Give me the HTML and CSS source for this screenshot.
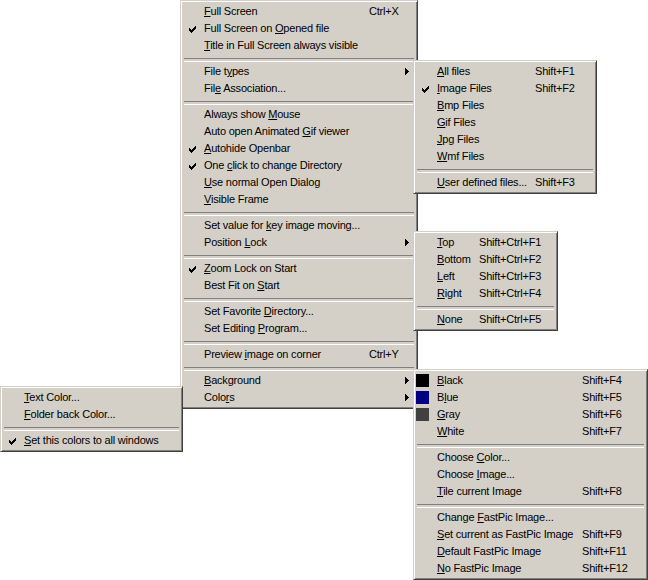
FILE: index.html
```html
<!DOCTYPE html>
<html>
<head>
<meta charset="utf-8">
<link rel="stylesheet" href="styles.css">
</head>
<body>
<div class="desk">

  <div class="menu m-main">
    <div class="item"><span class="mark"></span><span class="label"><u>F</u>ull Screen</span><span class="key">Ctrl+X</span></div>
    <div class="item"><span class="mark"><svg class="check" width="7" height="7" viewBox="0 0 7 7" shape-rendering="crispEdges"><path d="M6 0h1v1H6zM5 1h2v1H5zM0 2h1v1H0zM4 2h3v1H4zM0 3h2v1H0zM3 3h3v1H3zM0 4h5v1H0zM1 5h3v1H1zM2 6h1v1H2z"/></svg></span><span class="label">Full Screen on <u>O</u>pened file</span></div>
    <div class="item"><span class="mark"></span><span class="label"><u>T</u>itle in Full Screen always visible</span></div>
    <div class="sep"></div>
    <div class="item"><span class="mark"></span><span class="label">File t<u>y</u>pes</span><svg class="arrow" width="4" height="7" viewBox="0 0 4 7" shape-rendering="crispEdges"><path d="M0 0h1v7H0zM1 1h1v5H1zM2 2h1v3H2zM3 3h1v1H3z"/></svg></div>
    <div class="item"><span class="mark"></span><span class="label">Fil<u>e</u> Association...</span></div>
    <div class="sep"></div>
    <div class="item"><span class="mark"></span><span class="label">Always show <u>M</u>ouse</span></div>
    <div class="item"><span class="mark"></span><span class="label">Auto open Animated <u>G</u>if viewer</span></div>
    <div class="item"><span class="mark"><svg class="check" width="7" height="7" viewBox="0 0 7 7" shape-rendering="crispEdges"><path d="M6 0h1v1H6zM5 1h2v1H5zM0 2h1v1H0zM4 2h3v1H4zM0 3h2v1H0zM3 3h3v1H3zM0 4h5v1H0zM1 5h3v1H1zM2 6h1v1H2z"/></svg></span><span class="label"><u>A</u>utohide Openbar</span></div>
    <div class="item"><span class="mark"><svg class="check" width="7" height="7" viewBox="0 0 7 7" shape-rendering="crispEdges"><path d="M6 0h1v1H6zM5 1h2v1H5zM0 2h1v1H0zM4 2h3v1H4zM0 3h2v1H0zM3 3h3v1H3zM0 4h5v1H0zM1 5h3v1H1zM2 6h1v1H2z"/></svg></span><span class="label">One <u>c</u>lick to change Directory</span></div>
    <div class="item"><span class="mark"></span><span class="label"><u>U</u>se normal Open Dialog</span></div>
    <div class="item"><span class="mark"></span><span class="label"><u>V</u>isible Frame</span></div>
    <div class="sep"></div>
    <div class="item"><span class="mark"></span><span class="label">Set value for <u>k</u>ey image moving...</span></div>
    <div class="item"><span class="mark"></span><span class="label">Position <u>L</u>ock</span><svg class="arrow" width="4" height="7" viewBox="0 0 4 7" shape-rendering="crispEdges"><path d="M0 0h1v7H0zM1 1h1v5H1zM2 2h1v3H2zM3 3h1v1H3z"/></svg></div>
    <div class="sep"></div>
    <div class="item"><span class="mark"><svg class="check" width="7" height="7" viewBox="0 0 7 7" shape-rendering="crispEdges"><path d="M6 0h1v1H6zM5 1h2v1H5zM0 2h1v1H0zM4 2h3v1H4zM0 3h2v1H0zM3 3h3v1H3zM0 4h5v1H0zM1 5h3v1H1zM2 6h1v1H2z"/></svg></span><span class="label"><u>Z</u>oom Lock on Start</span></div>
    <div class="item"><span class="mark"></span><span class="label">Best Fit on <u>S</u>tart</span></div>
    <div class="sep"></div>
    <div class="item"><span class="mark"></span><span class="label">Set Favorite <u>D</u>irectory...</span></div>
    <div class="item"><span class="mark"></span><span class="label">Set Editing <u>P</u>rogram...</span></div>
    <div class="sep"></div>
    <div class="item"><span class="mark"></span><span class="label">Preview <u>i</u>mage on corner</span><span class="key">Ctrl+Y</span></div>
    <div class="sep"></div>
    <div class="item"><span class="mark"></span><span class="label"><u>B</u>ackground</span><svg class="arrow" width="4" height="7" viewBox="0 0 4 7" shape-rendering="crispEdges"><path d="M0 0h1v7H0zM1 1h1v5H1zM2 2h1v3H2zM3 3h1v1H3z"/></svg></div>
    <div class="item"><span class="mark"></span><span class="label">Colo<u>r</u>s</span><svg class="arrow" width="4" height="7" viewBox="0 0 4 7" shape-rendering="crispEdges"><path d="M0 0h1v7H0zM1 1h1v5H1zM2 2h1v3H2zM3 3h1v1H3z"/></svg></div>
  </div>

  <div class="menu m-types">
    <div class="item"><span class="mark"></span><span class="label"><u>A</u>ll files</span><span class="key">Shift+F1</span></div>
    <div class="item"><span class="mark"><svg class="check" width="7" height="7" viewBox="0 0 7 7" shape-rendering="crispEdges"><path d="M6 0h1v1H6zM5 1h2v1H5zM0 2h1v1H0zM4 2h3v1H4zM0 3h2v1H0zM3 3h3v1H3zM0 4h5v1H0zM1 5h3v1H1zM2 6h1v1H2z"/></svg></span><span class="label"><u>I</u>mage Files</span><span class="key">Shift+F2</span></div>
    <div class="item"><span class="mark"></span><span class="label"><u>B</u>mp Files</span></div>
    <div class="item"><span class="mark"></span><span class="label"><u>G</u>if Files</span></div>
    <div class="item"><span class="mark"></span><span class="label"><u>J</u>pg Files</span></div>
    <div class="item"><span class="mark"></span><span class="label"><u>W</u>mf Files</span></div>
    <div class="sep"></div>
    <div class="item"><span class="mark"></span><span class="label"><u>U</u>ser defined files...</span><span class="key">Shift+F3</span></div>
  </div>

  <div class="menu m-lock">
    <div class="item"><span class="mark"></span><span class="label"><u>T</u>op</span><span class="key">Shift+Ctrl+F1</span></div>
    <div class="item"><span class="mark"></span><span class="label"><u>B</u>ottom</span><span class="key">Shift+Ctrl+F2</span></div>
    <div class="item"><span class="mark"></span><span class="label"><u>L</u>eft</span><span class="key">Shift+Ctrl+F3</span></div>
    <div class="item"><span class="mark"></span><span class="label"><u>R</u>ight</span><span class="key">Shift+Ctrl+F4</span></div>
    <div class="sep"></div>
    <div class="item"><span class="mark"></span><span class="label"><u>N</u>one</span><span class="key">Shift+Ctrl+F5</span></div>
  </div>

  <div class="menu m-bg">
    <div class="item"><span class="mark"><span class="swatch sw-black"></span></span><span class="label"><u>B</u>lack</span><span class="key">Shift+F4</span></div>
    <div class="item"><span class="mark"><span class="swatch sw-blue"></span></span><span class="label">B<u>l</u>ue</span><span class="key">Shift+F5</span></div>
    <div class="item"><span class="mark"><span class="swatch sw-gray"></span></span><span class="label"><u>G</u>ray</span><span class="key">Shift+F6</span></div>
    <div class="item"><span class="mark"></span><span class="label"><u>W</u>hite</span><span class="key">Shift+F7</span></div>
    <div class="sep"></div>
    <div class="item"><span class="mark"></span><span class="label">Choose <u>C</u>olor...</span></div>
    <div class="item"><span class="mark"></span><span class="label">Choose <u>I</u>mage...</span></div>
    <div class="item"><span class="mark"></span><span class="label"><u>T</u>ile current Image</span><span class="key">Shift+F8</span></div>
    <div class="sep"></div>
    <div class="item"><span class="mark"></span><span class="label">Change <u>F</u>astPic Image...</span></div>
    <div class="item"><span class="mark"></span><span class="label"><u>S</u>et current as FastPic Image</span><span class="key">Shift+F9</span></div>
    <div class="item"><span class="mark"></span><span class="label"><u>D</u>efault FastPic Image</span><span class="key">Shift+F11</span></div>
    <div class="item"><span class="mark"></span><span class="label"><u>N</u>o FastPic Image</span><span class="key">Shift+F12</span></div>
  </div>

  <div class="menu m-colors">
    <div class="item"><span class="mark"></span><span class="label"><u>T</u>ext Color...</span></div>
    <div class="item"><span class="mark"></span><span class="label"><u>F</u>older back Color...</span></div>
    <div class="sep"></div>
    <div class="item"><span class="mark"><svg class="check" width="7" height="7" viewBox="0 0 7 7" shape-rendering="crispEdges"><path d="M6 0h1v1H6zM5 1h2v1H5zM0 2h1v1H0zM4 2h3v1H4zM0 3h2v1H0zM3 3h3v1H3zM0 4h5v1H0zM1 5h3v1H1zM2 6h1v1H2z"/></svg></span><span class="label"><u>S</u>et this colors to all windows</span></div>
  </div>

</div>
</body>
</html>
```

FILE: styles.css
```css
* { box-sizing: border-box; }

html, body {
  margin: 0;
  padding: 0;
  background: #ffffff;
}

body {
  font-family: "Liberation Sans", Arial, sans-serif;
  font-size: 11px;
  letter-spacing: -0.2px;
  color: #000000;
}

.desk {
  position: relative;
  width: 648px;
  height: 580px;
  overflow: hidden;
}

.menu {
  position: absolute;
  background: #d4d0c8;
  border: 1px solid;
  border-color: #d4d0c8 #404040 #404040 #d4d0c8;
  box-shadow: inset 1px 1px 0 #ffffff, inset -1px -1px 0 #808080;
  padding: 2px;
}

.m-main   { left: 180px; top: 0;     width: 238px; }
.m-types  { left: 413px; top: 60px;  width: 184px; }
.m-lock   { left: 413px; top: 231px; width: 145px; }
.m-bg     { left: 413px; top: 369px; width: 235px; }
.m-colors { left: 0;     top: 386px; width: 183px; }

.item {
  display: flex;
  align-items: center;
  height: 17px;
  line-height: 17px;
  white-space: nowrap;
}

.mark {
  flex: none;
  width: 21px;
  height: 17px;
  display: flex;
  align-items: center;
}

.check {
  display: block;
  margin-left: 6px;
  margin-top: 2px;
  fill: #000;
}

.swatch {
  display: block;
  width: 13px;
  height: 13px;
}
.sw-black { background: #000000; }
.sw-blue  { background: #000080; }
.sw-gray  { background: #404040; }

.label { flex: none; }
.key   { flex: none; }

.m-main .label  { width: 165px; }
.m-types .label { width: 98px; }
.m-lock .label  { width: 42px; }
.m-bg .label    { width: 145px; }

.arrow {
  display: block;
  margin-left: auto;
  margin-right: 6px;
  fill: #000;
  flex: none;
}

.sep {
  height: 9px;
  padding-top: 4px;
  margin: 0 1px;
}
.sep::before {
  content: "";
  display: block;
  height: 2px;
  border-top: 1px solid #808080;
  border-bottom: 1px solid #ffffff;
}

u {
  text-decoration: underline;
  text-underline-offset: 1px;
}
```
